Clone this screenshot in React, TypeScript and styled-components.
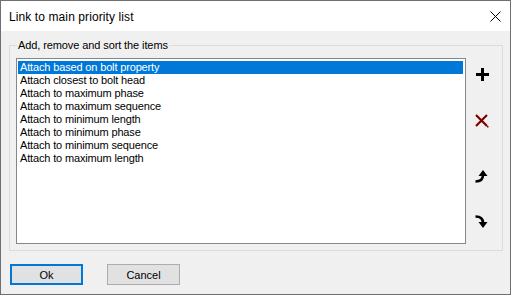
import React from 'react';
import styled, { createGlobalStyle } from 'styled-components';

const GlobalStyle = createGlobalStyle`
  html, body {
    margin: 0;
    padding: 0;
    background: #3b4754;
  }
  * {
    box-sizing: border-box;
  }
`;

const Window = styled.div`
  width: 511px;
  height: 295px;
  border: 1px solid #707070;
  background: #f0f0f0;
  display: flex;
  flex-direction: column;
  font-family: 'Liberation Sans', Arial, sans-serif;
  color: #000;
`;

const TitleBar = styled.div`
  height: 30px;
  background: #fff;
  display: flex;
  align-items: center;
  justify-content: space-between;
  padding: 0 8px 0 8px;
  flex-shrink: 0;
`;

const Title = styled.div`
  font-size: 12px;
  letter-spacing: 0.1px;
  padding-top: 1px;
`;

const CloseButton = styled.div`
  width: 12px;
  height: 12px;
  display: flex;
  align-items: center;
  justify-content: center;
  margin-right: 1px;
`;

const Body = styled.div`
  flex: 1;
  display: flex;
  flex-direction: column;
`;

const Group = styled.fieldset`
  margin: 7px 7px 0 8px;
  padding: 6px 0 6px 6px;
  border: 1px solid #dcdcdc;
  display: flex;
  min-width: 0;
`;

const Legend = styled.legend`
  font-size: 11px;
  line-height: 14px;
  padding: 0 1px;
  margin-left: 1px;
  letter-spacing: -0.1px;
`;

const GroupContent = styled.div`
  display: flex;
  flex-direction: row;
`;

const ListBox = styled.div`
  width: 450px;
  height: 186px;
  border: 1px solid #828790;
  background: #fff;
  padding: 2px 2px 0 1px;
  display: flex;
  flex-direction: column;
`;

const ListItem = styled.div<{ $selected?: boolean }>`
  height: 13px;
  line-height: 13px;
  font-size: 11px;
  letter-spacing: -0.15px;
  padding-left: 2px;
  white-space: nowrap;
  background: ${(p) => (p.$selected ? '#0078d7' : 'transparent')};
  color: ${(p) => (p.$selected ? '#fff' : '#000')};
`;

const ToolColumn = styled.div`
  display: flex;
  flex-direction: column;
  padding-left: 9px;
`;

const ToolButton = styled.div<{ $offset: number }>`
  width: 14px;
  height: 14px;
  margin-top: ${(p) => p.$offset}px;
  display: flex;
  align-items: center;
  justify-content: center;
`;

const ButtonRow = styled.div`
  display: flex;
  flex-direction: row;
  gap: 24px;
  padding: 13px 0 0 9px;
`;

const Button = styled.div<{ $default?: boolean }>`
  width: 73px;
  height: 21px;
  background: #e1e1e1;
  border: ${(p) => (p.$default ? '2px solid #0078d7' : '1px solid #adadad')};
  font-size: 11px;
  display: flex;
  align-items: center;
  justify-content: center;
`;

const items = [
  'Attach based on bolt property',
  'Attach closest to bolt head',
  'Attach to maximum phase',
  'Attach to maximum sequence',
  'Attach to minimum length',
  'Attach to minimum phase',
  'Attach to minimum sequence',
  'Attach to maximum length',
];

const CloseIcon = () => (
  <svg width="11" height="11" viewBox="0 0 11 11">
    <path d="M0.5 0.5 L10.5 10.5 M10.5 0.5 L0.5 10.5" stroke="#000" strokeWidth="1" />
  </svg>
);

const PlusIcon = () => (
  <svg width="13" height="13" viewBox="0 0 13 13">
    <rect x="5" y="0" width="3" height="13" fill="#000" />
    <rect x="0" y="5" width="13" height="3" fill="#000" />
  </svg>
);

const DeleteIcon = () => (
  <svg width="14" height="14" viewBox="0 0 14 14">
    <path d="M1 1 L12 12 M12 1 L1 12" stroke="#7a0000" strokeWidth="2.2" />
    <rect x="12" y="12" width="1.5" height="1.5" fill="#7a0000" />
  </svg>
);

const UpIcon = () => (
  <svg width="14" height="14" viewBox="0 0 14 14">
    <path d="M0.5 12.5 Q8 12.5 8 6" stroke="#000" strokeWidth="2.6" fill="none" />
    <polygon points="3.5,7 12.5,7 8,1" fill="#000" />
  </svg>
);

const DownIcon = () => (
  <svg width="14" height="14" viewBox="0 0 14 14">
    <path d="M0.5 1.5 Q8 1.5 8 8" stroke="#000" strokeWidth="2.6" fill="none" />
    <polygon points="3.5,7 12.5,7 8,13" fill="#000" />
  </svg>
);

export default function App() {
  return (
    <>
      <GlobalStyle />
      <Window>
        <TitleBar>
          <Title>Link to main priority list</Title>
          <CloseButton>
            <CloseIcon />
          </CloseButton>
        </TitleBar>
        <Body>
          <Group>
            <Legend>Add, remove and sort the items</Legend>
            <GroupContent>
              <ListBox>
                {items.map((item, i) => (
                  <ListItem key={item} $selected={i === 0}>
                    {item}
                  </ListItem>
                ))}
              </ListBox>
              <ToolColumn>
                <ToolButton $offset={9}>
                  <PlusIcon />
                </ToolButton>
                <ToolButton $offset={33}>
                  <DeleteIcon />
                </ToolButton>
                <ToolButton $offset={41}>
                  <UpIcon />
                </ToolButton>
                <ToolButton $offset={32}>
                  <DownIcon />
                </ToolButton>
              </ToolColumn>
            </GroupContent>
          </Group>
          <ButtonRow>
            <Button $default>Ok</Button>
            <Button>Cancel</Button>
          </ButtonRow>
        </Body>
      </Window>
    </>
  );
}
